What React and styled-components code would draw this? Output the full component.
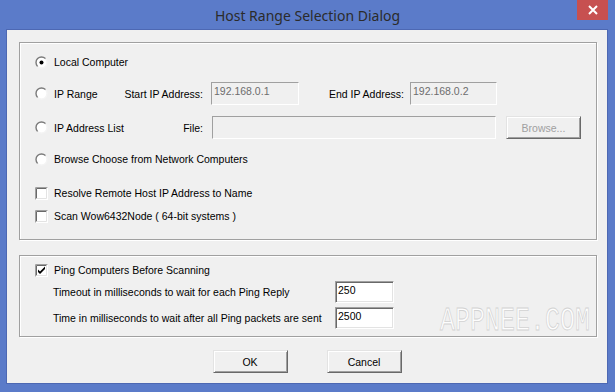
import React from 'react'
import styled, { createGlobalStyle } from 'styled-components'

const Global = createGlobalStyle`
    html, body {
        margin: 0;
        padding: 0;
        background: #5b7bc9;
    }
    body {
        font-family: "Liberation Sans", Arial, sans-serif;
        font-size: 10.5px;
        color: #000;
    }
`

const Window = styled.div`
    width: 615px;
    height: 392px;
    box-sizing: border-box;
    background: #5b7bc9;
    padding: 0 8px 9px 7px;
    display: flex;
    flex-direction: column;
`

const TitleBar = styled.div`
    height: 30px;
    display: grid;
    grid-template-columns: 1fr auto 1fr;
    align-items: center;
    margin-right: -1px;
`

const Title = styled.div`
    grid-column: 2;
    font-family: "Noto Sans", "Open Sans", sans-serif;
    font-size: 14px;
    color: #2b2b2b;
    padding-top: 1px;
`

const Close = styled.div`
    grid-column: 3;
    justify-self: end;
    align-self: start;
    width: 31px;
    height: 20px;
    background: #c75050;
    display: flex;
    align-items: center;
    justify-content: center;
`

const Client = styled.div`
    flex: 1;
    background: #f0f0f0;
    box-shadow: 0 0 0 1px #4d68b3;
    padding: 12px 10px 0 12px;
    display: flex;
    flex-direction: column;
`

const Group = styled.div`
    position: relative;
    height: ${p => p.$h}px;
    box-sizing: border-box;
    border: 1px solid #a0a0a0;
    box-shadow: inset 1px 1px 0 #fff, 1px 1px 0 #fff;
    margin-top: ${p => p.$mt || 0}px;
    padding: ${p => p.$pt}px 0 0 15px;
    display: flex;
    flex-direction: column;
`

const Row = styled.div`
    display: flex;
    align-items: center;
    height: ${p => p.$h || 20}px;
    margin-top: ${p => p.$mt || 0}px;
    white-space: nowrap;
`

const Option = styled.label`
    display: flex;
    align-items: center;
    width: ${p => p.$w ? `${p.$w}px` : 'auto'};
    gap: 6px;
    flex-shrink: 0;
    svg {
        flex-shrink: 0;
    }
`

const FieldLabel = styled.span`
    width: ${p => p.$w}px;
    margin-left: ${p => p.$ml || 0}px;
    text-align: ${p => p.$left ? 'left' : 'right'};
    padding-right: ${p => p.$pr || 0}px;
    box-sizing: border-box;
    flex-shrink: 0;
`

const TextBox = styled.div`
    width: ${p => p.$w}px;
    height: ${p => p.$h || 23}px;
    box-sizing: border-box;
    border: 1px solid;
    border-color: #a0a0a0 #fff #fff #a0a0a0;
    background: ${p => p.$disabled ? '#f0f0f0' : '#fff'};
    color: ${p => p.$disabled ? '#6d6d6d' : '#000'};
    box-shadow: ${p => p.$disabled ? 'none' : 'inset 1px 1px 0 #696969, inset -1px -1px 0 #e3e3e3'};
    padding: 1px 2px;
    line-height: 14px;
    margin-left: ${p => p.$ml || 0}px;
    flex-shrink: 0;
`

const Button = styled.div`
    width: 75px;
    height: 23px;
    box-sizing: border-box;
    border: 1px solid;
    border-color: #e3e3e3 #696969 #696969 #e3e3e3;
    box-shadow: inset 1px 1px 0 #fff, inset -1px -1px 0 #a0a0a0;
    background: #f0f0f0;
    color: ${p => p.$disabled ? '#a0a0a0' : '#000'};
    display: flex;
    align-items: center;
    justify-content: center;
    margin-left: ${p => p.$ml || 0}px;
    flex-shrink: 0;
`

const ButtonBar = styled.div`
    display: flex;
    justify-content: center;
    gap: 39px;
    margin-top: 13px;
    margin-right: 2px;
`

const Watermark = styled.div`
    position: absolute;
    right: 6px;
    bottom: -2px;
    font-family: "Liberation Mono", "DejaVu Sans Mono", monospace;
    font-size: 25px;
    color: #fdfdfd;
    -webkit-text-stroke: 0.6px #d2d2d2;
    transform: scaleY(1.3);
    transform-origin: bottom right;
    line-height: 1;
`

function Radio({ checked }) {
    return (
        <svg width="13" height="13" viewBox="0 0 13 13">
            <defs>
                <linearGradient id="rg" x1="0" y1="0" x2="1" y2="1">
                    <stop offset="0.45" stopColor="#7a7a7a" />
                    <stop offset="0.55" stopColor="#f4f4f4" />
                </linearGradient>
            </defs>
            <circle cx="6.5" cy="6.5" r="5.5" fill="#fff" stroke="url(#rg)" strokeWidth="1.4" />
            {checked && <circle cx="6.5" cy="6.5" r="2" fill="#000" />}
        </svg>
    )
}

function Check({ checked }) {
    return (
        <svg width="13" height="13" viewBox="0 0 13 13">
            <rect x="0" y="0" width="13" height="13" fill="#fff" />
            <path d="M0.5 12.5V0.5H12.5" stroke="#a0a0a0" fill="none" />
            <path d="M1.5 11.5V1.5H11.5" stroke="#696969" fill="none" />
            <path d="M1.5 11.5H11.5V1.5" stroke="#e3e3e3" fill="none" />
            {checked && <path d="M3 5.5l2 2 5-5v2.5l-5 5-2-2z" fill="#000" />}
        </svg>
    )
}

export default function App() {
    return (
        <>
            <Global />
            <Window>
                <TitleBar>
                    <Title>Host Range Selection Dialog</Title>
                    <Close>
                        <svg width="10" height="10" viewBox="0 0 10 10">
                            <path d="M1 1L9 9M9 1L1 9" stroke="#fff" strokeWidth="2" />
                        </svg>
                    </Close>
                </TitleBar>
                <Client>
                    <Group $h={198} $pt={9}>
                        <Row $h={20}>
                            <Option><Radio checked />Local Computer</Option>
                        </Row>
                        <Row $h={23} $mt={10}>
                            <Option $w={89}><Radio />IP Range</Option>
                            <FieldLabel $w={79}>Start IP Address:</FieldLabel>
                            <TextBox $w={88} $ml={8} $disabled>192.168.0.1</TextBox>
                            <FieldLabel $w={82} $ml={29} $pr={6}>End IP Address:</FieldLabel>
                            <TextBox $w={87} $disabled>192.168.0.2</TextBox>
                        </Row>
                        <Row $h={23} $mt={11}>
                            <Option $w={89}><Radio />IP Address List</Option>
                            <FieldLabel $w={79}>File:</FieldLabel>
                            <TextBox $w={284} $ml={9} $disabled />
                            <Button $ml={10} $disabled>Browse...</Button>
                        </Row>
                        <Row $h={20} $mt={10}>
                            <Option><Radio />Browse Choose from Network Computers</Option>
                        </Row>
                        <Row $h={20} $mt={14}>
                            <Option><Check />Resolve Remote Host IP Address to Name</Option>
                        </Row>
                        <Row $h={20} $mt={3}>
                            <Option><Check />Scan Wow6432Node ( 64-bit systems )</Option>
                        </Row>
                    </Group>
                    <Group $h={82} $mt={15} $pt={4}>
                        <Row $h={20}>
                            <Option><Check checked />Ping Computers Before Scanning</Option>
                        </Row>
                        <Row $h={22} $mt={1}>
                            <FieldLabel $w={282} $ml={18} $left>Timeout in milliseconds to wait for each Ping Reply</FieldLabel>
                            <TextBox $w={59} $h={22}>250</TextBox>
                        </Row>
                        <Row $h={22} $mt={4}>
                            <FieldLabel $w={282} $ml={18} $left>Time in milliseconds to wait after all Ping packets are sent</FieldLabel>
                            <TextBox $w={59} $h={22}>2500</TextBox>
                        </Row>
                        <Watermark>APPNEE.COM</Watermark>
                    </Group>
                    <ButtonBar>
                        <Button>OK</Button>
                        <Button>Cancel</Button>
                    </ButtonBar>
                </Client>
            </Window>
        </>
    )
}
